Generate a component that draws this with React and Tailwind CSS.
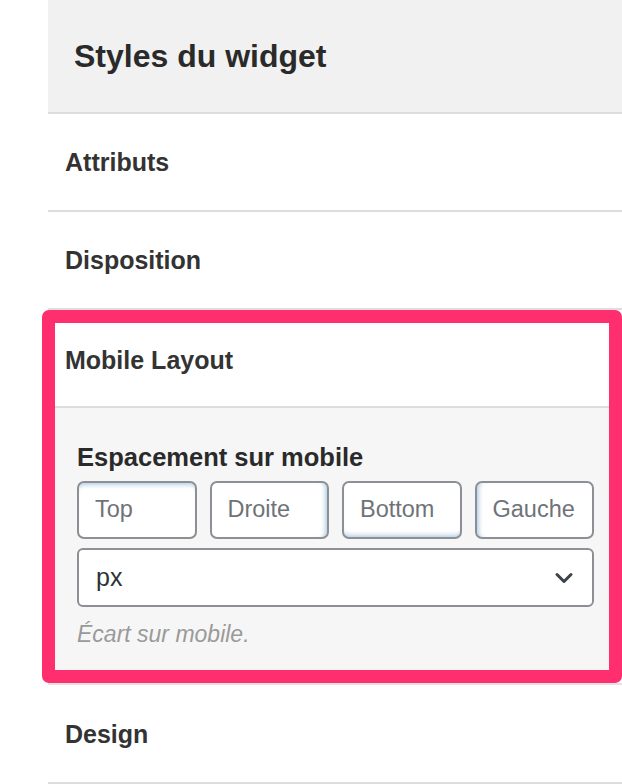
import React from 'react';
import { ChevronDown } from 'lucide-react';

// panneau "Styles du widget" avec la section Mobile Layout surlignée
const sides = [
  { label: 'Top', glow: 'shadow-[inset_0_5px_4px_-3px_rgba(120,170,210,0.55)]' },
  { label: 'Droite', glow: 'shadow-[inset_-5px_0_4px_-3px_rgba(120,170,210,0.55)]' },
  { label: 'Bottom', glow: 'shadow-[inset_0_-5px_4px_-3px_rgba(120,170,210,0.55)]' },
  { label: 'Gauche', glow: 'shadow-[inset_5px_0_4px_-3px_rgba(120,170,210,0.55)]' },
];

function Row({ title }) {
  return (
    <div className="h-[98px] border-b-2 border-[#dddddd] flex items-center pl-[17px] pt-[2px]">
      <span className="text-[25px] font-bold text-[#333]">{title}</span>
    </div>
  );
}

export default function App() {
  return (
    <div className="min-h-screen bg-white pl-[48px] font-['Liberation_Sans',Arial,sans-serif] text-[#333] overflow-hidden">
      <div className="h-[114px] bg-[#f1f1f1] border-b-2 border-[#dddddd] flex items-center pl-[26px]">
        <h2 className="text-[32px] font-bold text-[#2a2a2a]">Styles du widget</h2>
      </div>

      <Row title="Attributs" />
      <Row title="Disposition" />

      {/* section surlignée */}
      <div className="ml-[-6px] w-[580px] border-[13px] border-[#ff2e6e] rounded-[7px] bg-white">
        <div className="h-[85px] border-b-2 border-[#dddddd] flex items-center pl-[10px] pb-[8px]">
          <span className="text-[25px] font-bold text-[#333]">Mobile Layout</span>
        </div>
        <div className="bg-[#f6f6f6] h-[262px] pl-[22px] pr-[15px] pt-[34px]">
          <div className="text-[25.5px] leading-[30px] font-bold text-[#2a2a2a]">Espacement sur mobile</div>
          <div className="grid grid-cols-4 gap-[13px] mt-[9px]">
            {sides.map((s) => (
              <div
                key={s.label}
                className={`h-[58px] bg-white border-2 border-[#8c8f94] rounded-[7px] flex items-center pl-[16px] text-[23.5px] text-[#6f7378] ${s.glow}`}
              >
                {s.label}
              </div>
            ))}
          </div>
          <div className="mt-[9px] h-[59px] bg-white border-2 border-[#8c8f94] rounded-[6px] flex items-center justify-between pl-[17px] pr-[14px]">
            <span className="text-[25px] text-[#2c3338]">px</span>
            <ChevronDown size={28} strokeWidth={2.6} className="text-[#3c434a]" />
          </div>
          <p className="mt-[12px] text-[23px] leading-[30px] italic text-[#9a9a9a]">Écart sur mobile.</p>
        </div>
      </div>

      <div className="h-[101px] border-t-2 border-t-[#e6e1e2] border-b-2 border-[#dddddd] flex items-center pl-[17px] pt-[2px]">
        <span className="text-[25px] font-bold text-[#333]">Design</span>
      </div>
    </div>
  );
}
